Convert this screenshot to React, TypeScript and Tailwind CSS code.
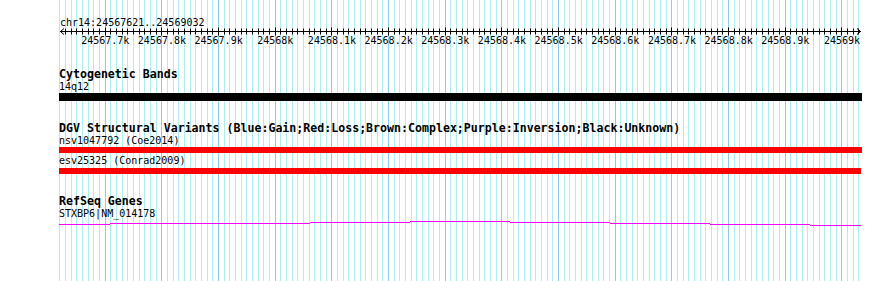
import React from 'react';

const START = 24567621;
const END = 24569032;
const X0 = 60.5;
const PX_PER_BP = 0.5667;

const toX = (bp: number) => X0 + (bp - START) * PX_PER_BP;

// every 10bp between start and end
const gridBps: number[] = [];
for (let bp = Math.ceil(START / 10) * 10; bp <= END; bp += 10) gridBps.push(bp);

const majorLabel = (bp: number) => {
    const k = bp / 1000;
    return (Number.isInteger(k) ? k.toString() : k.toFixed(1)) + 'k';
};

// stepped gene line, one row per ~100px
const geneSegs = [
    { x1: 59, x2: 110, y: 4.5 },
    { x1: 110, x2: 210, y: 3.5 },
    { x1: 210, x2: 310, y: 3.5 },
    { x1: 310, x2: 410, y: 2.5 },
    { x1: 410, x2: 510, y: 1.5 },
    { x1: 510, x2: 610, y: 2.5 },
    { x1: 610, x2: 710, y: 3.5 },
    { x1: 710, x2: 810, y: 4.5 },
    { x1: 810, x2: 861, y: 5.5 },
];

function Grid() {
    return (
        <svg className="absolute inset-0" width={890} height={281}>
            <line x1={59.5} x2={59.5} y1={0} y2={281} stroke="#afeeee" strokeWidth={1} />
            {gridBps.map((bp) => {
                const x = Math.floor(toX(bp)) + 0.5;
                const major = bp % 100 === 0;
                return (
                    <line
                        key={bp}
                        x1={x}
                        x2={x}
                        y1={0}
                        y2={281}
                        stroke={major ? '#8ecbea' : '#afeeee'}
                        strokeWidth={1}
                    />
                );
            })}
        </svg>
    );
}

function Ruler() {
    // svg top sits at page y=26
    return (
        <svg width={890} height={20} className="block -ml-[59px] -mt-[2.5px] overflow-visible">
            <line x1={60} x2={861} y1={5.5} y2={5.5} stroke="#000" strokeWidth={1} />
            <polyline points="64,2.5 60.5,5.5 64,8.5" fill="none" stroke="#000" strokeWidth={1} />
            <polyline points="857,2.5 860.5,5.5 857,8.5" fill="none" stroke="#000" strokeWidth={1} />
            {gridBps.map((bp) => {
                const x = Math.floor(toX(bp)) + 0.5;
                const major = bp % 100 === 0;
                return (
                    <line
                        key={bp}
                        x1={x}
                        x2={x}
                        y1={major ? 1.5 : 2.5}
                        y2={major ? 9.5 : 8.5}
                        stroke="#000"
                        strokeWidth={1}
                    />
                );
            })}
            {gridBps
                .filter((bp) => bp % 100 === 0)
                .map((bp) => (
                    <text
                        key={bp}
                        x={toX(bp)}
                        y={18}
                        textAnchor="middle"
                        fontSize={10}
                        fontFamily='"DejaVu Sans Mono", monospace'
                        fill="#000"
                    >
                        {majorLabel(bp)}
                    </text>
                ))}
        </svg>
    );
}

function TrackTitle({ children, className = '' }: { children: React.ReactNode; className?: string }) {
    return <div className={`text-[11.6px] leading-[13px] font-bold whitespace-nowrap ${className}`}>{children}</div>;
}

function Label({ children, className = '' }: { children: React.ReactNode; className?: string }) {
    return <div className={`text-[10px] leading-[12px] whitespace-nowrap ${className}`}>{children}</div>;
}

export default function App() {
    return (
        <div
            className="relative w-[890px] h-[281px] bg-white overflow-hidden text-black"
            style={{ fontFamily: '"DejaVu Sans Mono", "Liberation Mono", monospace' }}
        >
            <Grid />
            <div className="relative pl-[59px] pt-[16.5px]">
                <Label className="pl-[1px]">chr14:24567621..24569032</Label>
                <Ruler />

                <TrackTitle className="mt-[21.5px]">Cytogenetic Bands</TrackTitle>
                <Label>14q12</Label>
                <div className="mt-[0.5px] w-[803px] h-[8px] bg-black" />

                <TrackTitle className="mt-[20.5px]">
                    DGV Structural Variants (Blue:Gain;Red:Loss;Brown:Complex;Purple:Inversion;Black:Unknown)
                </TrackTitle>
                <Label className="mt-[0.5px]">nsv1047792 (Coe2014)</Label>
                <div className="w-[803px] h-[6px] bg-[#ff0000]" />
                <Label className="mt-[2px]">esv25325 (Conrad2009)</Label>
                <div className="mt-[1px] w-[802px] h-[6px] bg-[#ff0000]" />

                <TrackTitle className="mt-[21px]">RefSeq Genes</TrackTitle>
                <Label>STXBP6|NM_014178</Label>
                <svg width={890} height={8} className="block -ml-[59px]">
                    {geneSegs.map((s, i) => (
                        <line key={i} x1={s.x1} x2={s.x2} y1={s.y} y2={s.y} stroke="#ff00ff" strokeWidth={1} />
                    ))}
                </svg>
            </div>
        </div>
    );
}
